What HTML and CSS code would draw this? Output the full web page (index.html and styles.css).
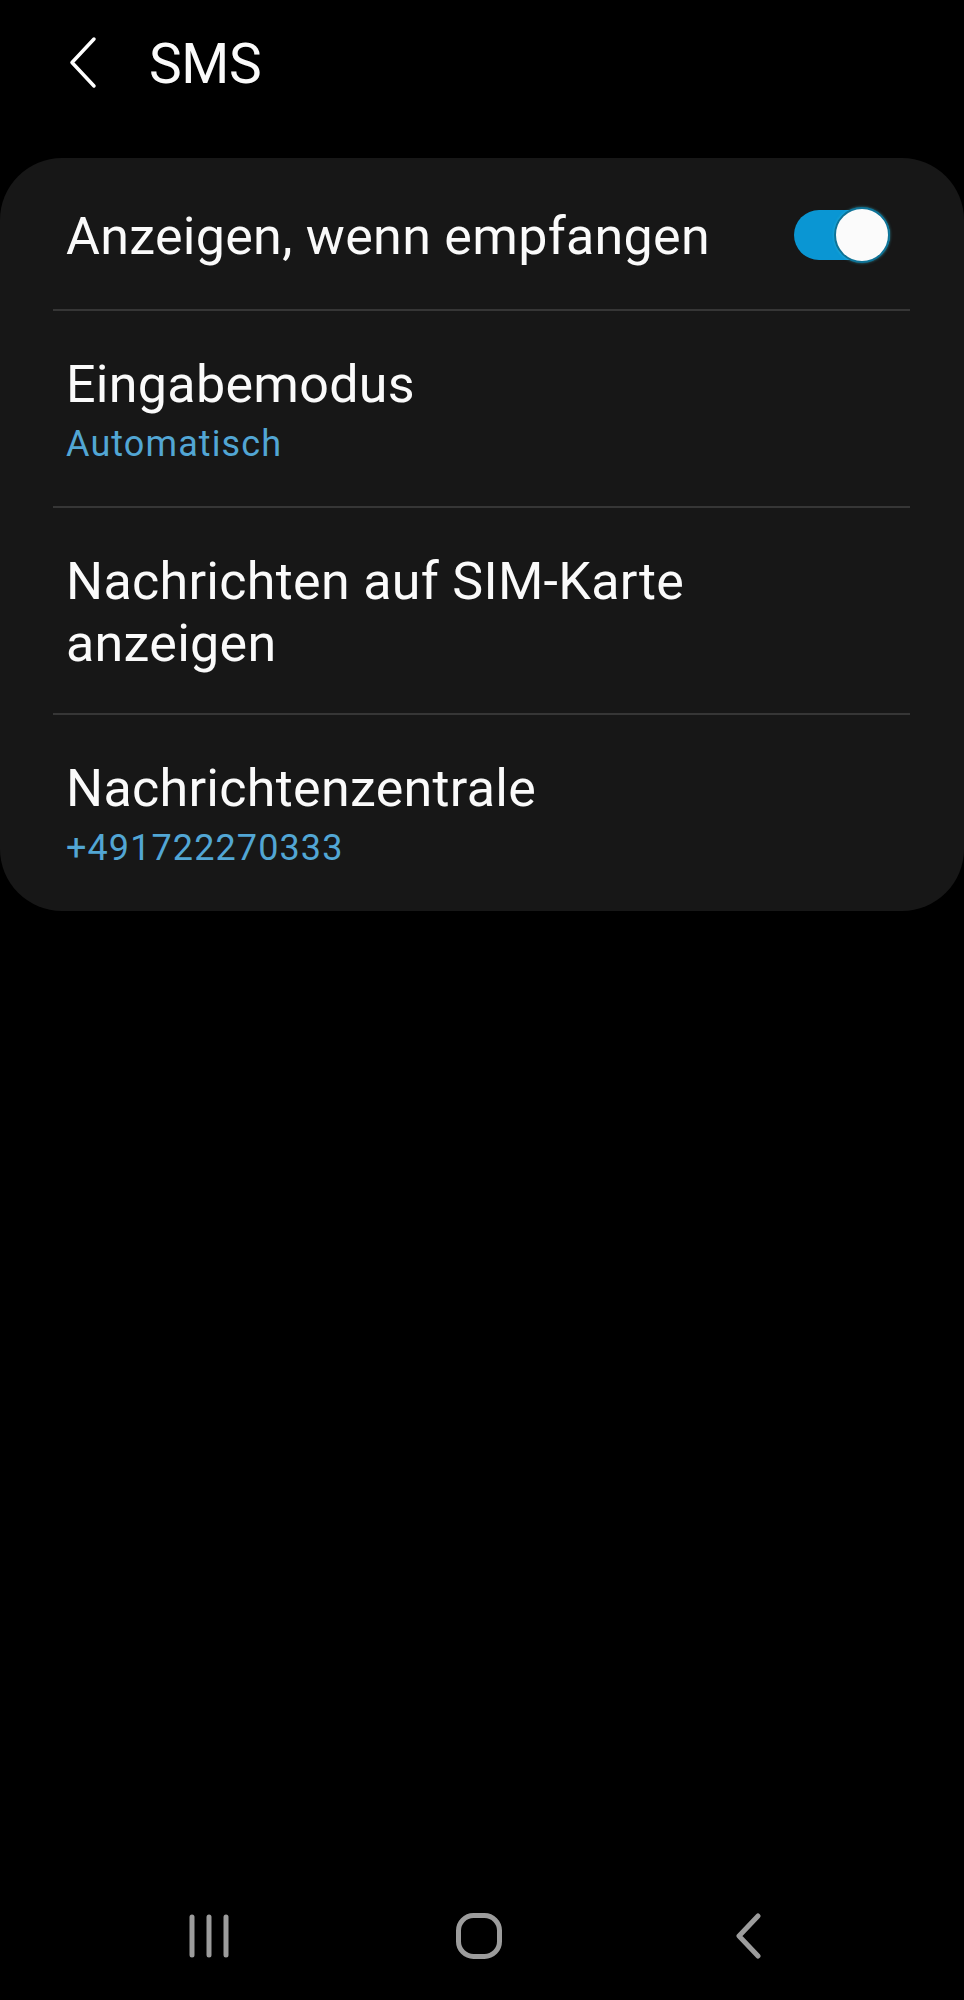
FILE: index.html
```html
<!DOCTYPE html>
<html lang="de">

<head>
    <meta charset="UTF-8">
    <meta name="viewport" content="width=device-width, initial-scale=1.0">
    <title>SMS</title>
    <link rel="stylesheet" href="styles.css">
</head>

<body>
    <div class="screen">
        <!-- Top bar -->
        <header class="top-bar">
            <svg class="back-icon" width="30" height="53" viewBox="0 0 30 53">
                <polyline points="26,3 4,26.5 26,50" fill="none" stroke="#fff" stroke-width="3.5"
                    stroke-linecap="round" stroke-linejoin="round" />
            </svg>
            <h1 class="title">SMS</h1>
        </header>

        <!-- Settings card -->
        <div class="card">
            <div class="row row-first">
                <div class="row-text">
                    <p class="row-title">Anzeigen, wenn empfangen</p>
                </div>
                <div class="switch">
                    <div class="switch-track"></div>
                    <div class="switch-thumb"></div>
                </div>
            </div>
            <div class="row">
                <div class="row-text">
                    <p class="row-title">Eingabemodus</p>
                    <p class="row-sub">Automatisch</p>
                </div>
            </div>
            <div class="row row-two-lines">
                <div class="row-text">
                    <p class="row-title">Nachrichten auf SIM-Karte<br>anzeigen</p>
                </div>
            </div>
            <div class="row row-last">
                <div class="row-text">
                    <p class="row-title">Nachrichtenzentrale</p>
                    <p class="row-sub">+491722270333</p>
                </div>
            </div>
        </div>

        <div class="spacer"></div>

        <!-- Navigation bar -->
        <nav class="nav-bar">
            <svg class="nav-icon" width="44" height="46" viewBox="0 0 44 46">
                <g stroke="#9c9c9c" stroke-width="5" stroke-linecap="round">
                    <line x1="5" y1="4" x2="5" y2="42" />
                    <line x1="22" y1="4" x2="22" y2="42" />
                    <line x1="39" y1="4" x2="39" y2="42" />
                </g>
            </svg>
            <svg class="nav-icon" width="48" height="48" viewBox="0 0 48 48">
                <rect x="3.5" y="3.5" width="41" height="41" rx="15" fill="none" stroke="#9c9c9c"
                    stroke-width="5" />
            </svg>
            <svg class="nav-icon" width="30" height="46" viewBox="0 0 30 46">
                <polyline points="24,3 5,23 24,43" fill="none" stroke="#9c9c9c" stroke-width="5"
                    stroke-linecap="round" stroke-linejoin="round" />
            </svg>
        </nav>
    </div>
</body>

</html>
```

FILE: styles.css
```css
/* Reset some default styles */
* {
    margin: 0;
    padding: 0;
    box-sizing: border-box;
}

body {
    background-color: #000;
    font-family: Roboto, "Noto Sans", Arial, sans-serif;
    color: #fafafa;
}

.screen {
    min-height: 2000px;
    display: flex;
    flex-direction: column;
}

.top-bar {
    height: 128px;
    display: flex;
    align-items: center;
    padding-left: 68px;
    margin-bottom: 30px;
}

.back-icon {
    margin-right: 51px;
    margin-top: -4px;
}

.title {
    font-size: 55px;
    font-weight: 400;
    letter-spacing: -0.3px;
}

.card {
    background-color: #171717;
    border-radius: 62px;
    padding: 0 54px 0 53px;
}

.row {
    display: flex;
    align-items: center;
    justify-content: space-between;
    padding: 43px 0 40px 13px;
    border-bottom: 2px solid #363636;
}

.row-first {
    padding-top: 48px;
    padding-bottom: 41px;
}

.row-two-lines {
    padding-bottom: 38px;
}

.row-last {
    border-bottom: none;
    padding-bottom: 41px;
}

.row-title {
    font-size: 52px;
    line-height: 62px;
    letter-spacing: 0.3px;
}

.row-sub {
    font-size: 36px;
    line-height: 44px;
    letter-spacing: 1.1px;
    margin-top: 6px;
    color: #52a6d4;
}

/* toggle switch */
.switch {
    position: relative;
    width: 96px;
    height: 56px;
    margin-right: 20px;
    margin-top: -4px;
}

.switch-track {
    position: absolute;
    left: 0;
    top: 3px;
    width: 96px;
    height: 50px;
    border-radius: 25px;
    background-color: #0a96d3;
}

.switch-thumb {
    position: absolute;
    right: 0;
    top: 0;
    width: 56px;
    height: 56px;
    border-radius: 50%;
    background-color: #fbfbfb;
    border: 2px solid #0e7397;
    box-shadow: 0 0 3px rgba(60, 200, 230, 0.6);
}

.spacer {
    flex: 1;
}

.nav-bar {
    height: 128px;
    display: grid;
    grid-template-columns: repeat(3, 270px);
    justify-content: center;
    justify-items: center;
    align-items: center;
    padding-right: 6px;
}
```
